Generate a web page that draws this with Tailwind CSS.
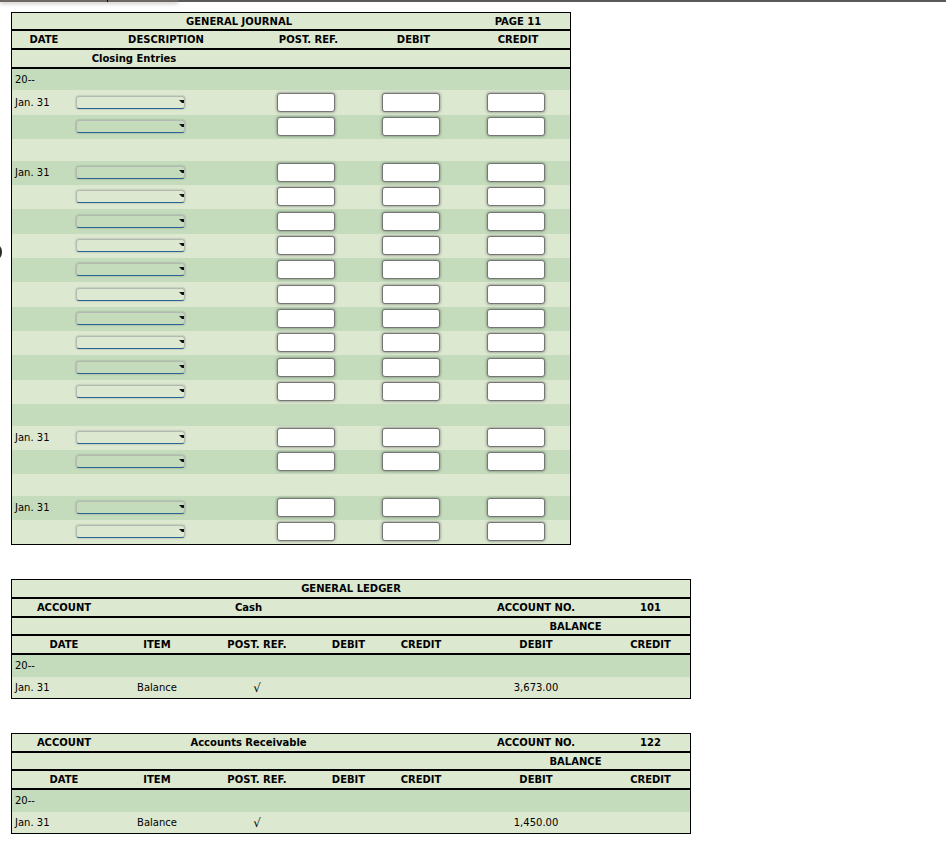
<!DOCTYPE html>
<html lang="en">
<head>
<meta charset="utf-8">
<title>General Journal</title>
<script src="https://cdn.jsdelivr.net/npm/@tailwindcss/browser@4"></script>
</head>
<body class="relative bg-white font-['Verdana','DejaVu_Sans',sans-serif] text-[10px] leading-[12px] text-black">
<header class="flex h-3 items-start">
  <div class="flex h-[2px] w-[178px] bg-[#6b6866] shadow-[0_1px_4px_rgba(0,0,0,0.4)]">
    <div class="w-[108px] border-r border-black"></div>
  </div>
  <div class="h-[2px] flex-1 bg-[#5a5a5c]"></div>
</header>
<div class="absolute top-[242px] left-[-18px] size-5 rounded-full bg-[#2b2b2b]"></div>
<main class="flex flex-col items-start gap-[34px] pl-[11px]">
  <table class="w-[560px] table-fixed border-separate border-spacing-0 border border-black bg-[#dce8d0]">
    <colgroup><col class="w-[64px]"><col class="w-[180px]"><col class="w-[105px]"><col class="w-[105px]"><col class="w-[104px]"></colgroup>
    <thead class="[&_th]:border-b-2 [&_th]:border-black [&_th]:p-0 [&_th]:pt-px [&_th]:font-bold">
      <tr class="h-[18px]"><th colspan="4">GENERAL JOURNAL</th><th>PAGE 11</th></tr>
      <tr class="h-[19px]"><th>DATE</th><th>DESCRIPTION</th><th>POST. REF.</th><th>DEBIT</th><th>CREDIT</th></tr>
      <tr class="h-[19px]"><th colspan="2">Closing Entries</th><th colspan="3"></th></tr>
    </thead>
    <tbody id="journal"></tbody>
  </table>

  <table class="w-[680px] table-fixed border-separate border-spacing-0 border border-black bg-[#dce8d0]">
    <colgroup><col class="w-[104px]"><col class="w-[82px]"><col class="w-[118px]"><col class="w-[65px]"><col class="w-[80px]"><col class="w-[150px]"><col class="w-[79px]"></colgroup>
    <thead class="[&_th]:border-b-2 [&_th]:border-black [&_th]:p-0 [&_th]:pt-px [&_th]:font-bold">
      <tr class="h-[19px]"><th colspan="7">GENERAL LEDGER</th></tr>
      <tr class="h-[19px]"><th>ACCOUNT</th><th colspan="3">Cash</th><th></th><th>ACCOUNT NO.</th><th>101</th></tr>
      <tr class="h-[18px]"><th colspan="5"></th><th colspan="2">BALANCE</th></tr>
      <tr class="h-[19px]"><th>DATE</th><th>ITEM</th><th>POST. REF.</th><th>DEBIT</th><th>CREDIT</th><th>DEBIT</th><th>CREDIT</th></tr>
    </thead>
    <tbody class="text-center [&_td]:p-0">
      <tr class="h-[22px] bg-[#c4dcbc]"><td class="text-left"><span class="ml-[3px]">20--</span></td><td colspan="6"></td></tr>
      <tr class="h-[21px]"><td class="text-left"><span class="ml-[3px]">Jan. 31</span></td><td>Balance</td><td class="text-xs">√</td><td></td><td></td><td>3,673.00</td><td></td></tr>
    </tbody>
  </table>

  <table class="w-[680px] table-fixed border-separate border-spacing-0 border border-black bg-[#dce8d0]">
    <colgroup><col class="w-[104px]"><col class="w-[82px]"><col class="w-[118px]"><col class="w-[65px]"><col class="w-[80px]"><col class="w-[150px]"><col class="w-[79px]"></colgroup>
    <thead class="[&_th]:border-b-2 [&_th]:border-black [&_th]:p-0 [&_th]:pt-px [&_th]:font-bold">
      <tr class="h-[19px]"><th>ACCOUNT</th><th colspan="3">Accounts Receivable</th><th></th><th>ACCOUNT NO.</th><th>122</th></tr>
      <tr class="h-[18px]"><th colspan="5"></th><th colspan="2">BALANCE</th></tr>
      <tr class="h-[19px]"><th>DATE</th><th>ITEM</th><th>POST. REF.</th><th>DEBIT</th><th>CREDIT</th><th>DEBIT</th><th>CREDIT</th></tr>
    </thead>
    <tbody class="text-center [&_td]:p-0">
      <tr class="h-[22px] bg-[#c4dcbc]"><td class="text-left"><span class="ml-[3px]">20--</span></td><td colspan="6"></td></tr>
      <tr class="h-[21px]"><td class="text-left"><span class="ml-[3px]">Jan. 31</span></td><td>Balance</td><td class="text-xs">√</td><td></td><td></td><td>1,450.00</td><td></td></tr>
    </tbody>
  </table>
</main>
<script>
  // kind: y = year line, e = entry line, E = taller entry line, b = blank line
  const rows = [['y','20--'],['E','Jan. 31'],['e',''],['b',''],
    ['e','Jan. 31'],['e',''],['E',''],['e',''],['e',''],['E',''],['e',''],['e',''],['E',''],['e',''],['b',''],
    ['e','Jan. 31'],['e',''],['b',''],['e','Jan. 31'],['e','']];
  const heights = { y: 'h-[21px]', e: 'h-[24px]', E: 'h-[25px]', b: 'h-[22px]' };
  document.getElementById('journal').innerHTML = rows.map(([kind, date], i) => {
    const shade = i % 2 ? 'bg-[#dce8d0]' : 'bg-[#c4dcbc]';
    const first = `<td class="p-0 pl-[3px]">${date}</td>`;
    if (kind === 'y' || kind === 'b') return `<tr class="${heights[kind]} ${shade}">${first}<td colspan="4" class="p-0"></td></tr>`;
    const box = name => `<td class="p-0 pb-px pl-[21px]"><input type="text" aria-label="${name}, line ${i}" class="block h-[19px] w-[58px] rounded-[3px] border border-[#767676] bg-white px-1 shadow-[0_0_3px_rgba(0,0,0,0.5)]"></td>`;
    return `<tr class="${heights[kind]} ${shade}">${first}
      <td class="p-0 pb-px"><div class="relative w-[109px]">
        <select aria-label="Description, line ${i}" class="block h-[13px] w-full appearance-none rounded-[3px] border border-[#b4b8b2] border-b-[#2a6496] bg-transparent shadow-[0_0_2px_rgba(0,0,0,0.35)]"><option></option></select>
        <svg class="pointer-events-none absolute top-1 right-px h-[3px] w-[5px]" viewBox="0 0 5 3"><path d="M0 0H5V3H3Z" fill="#111"/></svg>
      </div></td>${box('Post. ref.')}${box('Debit')}${box('Credit')}</tr>`;
  }).join('');
</script>
</body>
</html>
